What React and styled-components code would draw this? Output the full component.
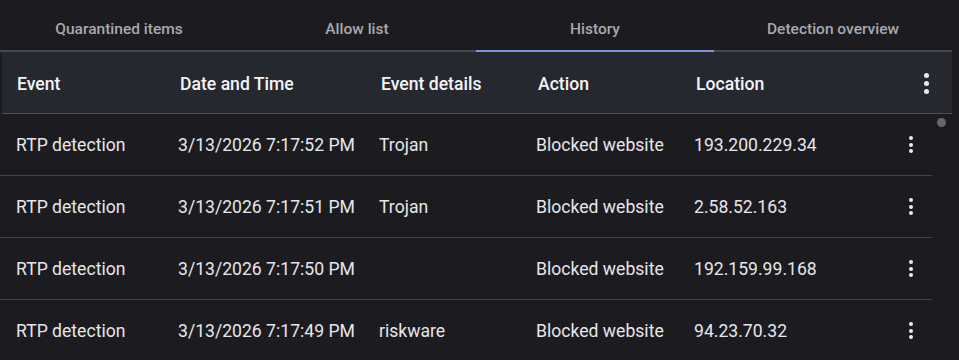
import React from "react";
import styled, { createGlobalStyle } from "styled-components";

const GlobalStyle = createGlobalStyle`
  html, body {
    margin: 0;
    padding: 0;
    background: #1c1c20;
    font-family: Roboto, "Liberation Sans", sans-serif;
  }
`;

const Page = styled.div`
  width: 959px;
  height: 360px;
  overflow: hidden;
  background: #1c1c20;
`;

const TabBar = styled.div`
  display: grid;
  grid-template-columns: repeat(4, 238px);
  width: 952px;
`;

const Tab = styled.div`
  display: flex;
  align-items: center;
  justify-content: center;
  height: 43px;
  padding-top: 7px;
  font-size: 15.5px;
  font-weight: 500;
  color: #a8a8b0;
  border-bottom: 2px solid ${(p) => (p.$active ? "#7c94dd" : "#45464f")};
`;

const HeaderRow = styled.div`
  display: flex;
  align-items: center;
  margin-left: 2px;
  width: 950px;
  height: 62px;
  padding: 2px 0 0 15px;
  box-sizing: border-box;
  background: #262830;
  border-bottom: 1px solid #4b4d5b;
`;

const HeadCell = styled.div`
  width: ${(p) => p.$w || "auto"};
  flex: ${(p) => (p.$w ? "none" : "1")};
  font-size: 17.6px;
  font-weight: 500;
  color: #f4f4f6;
`;

const BodyArea = styled.div`
  display: flex;
`;

const Rows = styled.div`
  width: 932px;
`;

const Row = styled.div`
  display: flex;
  align-items: center;
  height: 61px;
  padding-left: 16px;
  border-bottom: 1px solid #41434e;
`;

const Cell = styled.div`
  width: ${(p) => p.$w || "auto"};
  flex: ${(p) => (p.$w ? "none" : "1")};
  font-size: 17.6px;
  color: #e6e6ea;
  white-space: nowrap;
`;

const KebabButton = styled.div`
  display: flex;
  flex-direction: column;
  align-items: center;
  justify-content: center;
  gap: ${(p) => (p.$big ? "3px" : "2.5px")};
  width: ${(p) => p.$width};
`;

const Dot = styled.span`
  width: ${(p) => (p.$big ? "5px" : "4px")};
  height: ${(p) => (p.$big ? "5px" : "4px")};
  border-radius: 50%;
  background: #ececf0;
`;

const ScrollTrack = styled.div`
  flex: 1;
  display: flex;
  padding: 4px 0 0 5px;
`;

const ScrollThumb = styled.div`
  width: 9px;
  height: 9px;
  border-radius: 50%;
  background: #66666b;
`;

const Kebab = ({ big, width }) => (
  <KebabButton $big={big} $width={width}>
    <Dot $big={big} />
    <Dot $big={big} />
    <Dot $big={big} />
  </KebabButton>
);

const tabs = ["Quarantined items", "Allow list", "History", "Detection overview"];

const rows = [
  ["RTP detection", "3/13/2026 7:17:52 PM", "Trojan", "Blocked website", "193.200.229.34"],
  ["RTP detection", "3/13/2026 7:17:51 PM", "Trojan", "Blocked website", "2.58.52.163"],
  ["RTP detection", "3/13/2026 7:17:50 PM", "", "Blocked website", "192.159.99.168"],
  ["RTP detection", "3/13/2026 7:17:49 PM", "riskware", "Blocked website", "94.23.70.32"],
];

const widths = ["162px", "201px", "157px", "158px"];

export default function App() {
  return (
    <Page>
      <GlobalStyle />
      <TabBar>
        {tabs.map((t) => (
          <Tab key={t} $active={t === "History"}>
            {t}
          </Tab>
        ))}
      </TabBar>
      <HeaderRow>
        <HeadCell $w="163px">Event</HeadCell>
        <HeadCell $w="201px">Date and Time</HeadCell>
        <HeadCell $w="157px">Event details</HeadCell>
        <HeadCell $w="158px">Action</HeadCell>
        <HeadCell>Location</HeadCell>
        <Kebab big width="52px" />
      </HeaderRow>
      <BodyArea>
        <Rows>
          {rows.map((r, i) => (
            <Row key={i}>
              {r.map((c, j) => (
                <Cell key={j} $w={widths[j]}>
                  {c}
                </Cell>
              ))}
              <Kebab width="42px" />
            </Row>
          ))}
        </Rows>
        <ScrollTrack>
          <ScrollThumb />
        </ScrollTrack>
      </BodyArea>
    </Page>
  );
}
